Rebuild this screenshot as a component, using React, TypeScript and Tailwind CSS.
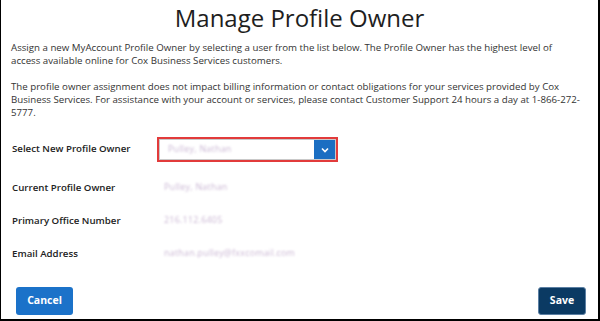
import React from "react";

function Row({ label, children, className = "" }: { label: string; children: React.ReactNode; className?: string }) {
  return (
    <div className={`flex items-center ${className}`}>
      <div className="w-[152px] shrink-0 text-[9.7px] font-semibold text-[#222]">{label}</div>
      {children}
    </div>
  );
}

function Blurred({ children }: { children: React.ReactNode }) {
  return (
    <span className="text-[8.8px] text-[#cbb8d4] blur-[0.9px] tracking-[0.3px]">{children}</span>
  );
}

export default function App() {
  return (
    <div className="w-[600px] h-[321px] bg-white border-l border-r-2 border-b-2 border-black flex flex-col font-['Open_Sans',sans-serif]">
      <h1 className="text-center text-[24px] leading-[30px] pt-[3px] text-[#1e1e1e]">Manage Profile Owner</h1>
      <div className="px-[10px] mt-[8px] text-[9.7px] leading-[13px] text-[#333]">
        <p>
          Assign a new MyAccount Profile Owner by selecting a user from the list below. The Profile Owner has the highest level of
          <br />
          access available online for Cox Business Services customers.
        </p>
        <p className="mt-[13px]">
          The profile owner assignment does not impact billing information or contact obligations for your services provided by Cox
          <br />
          Business Services. For assistance with your account or services, please contact Customer Support 24 hours a day at 1-866-272-
          <br />
          5777.
        </p>
      </div>
      <div className="px-[11px] mt-[18px] flex flex-col">
        <Row label="Select New Profile Owner" className="h-[25px]">
          <div className="ml-[-7px] w-[181px] h-[25px] border-2 border-[#e23b3b] flex">
            <div className="flex-1 flex border border-[#c9c9c9] bg-white">
              <div className="flex-1 flex items-center pl-[8px]">
                <span className="text-[8.8px] text-[#cbb8d4] blur-[0.9px] tracking-[0.3px]">Pulley, Nathan</span>
              </div>
              <div className="w-[21px] bg-[#1b6ec2] flex items-center justify-center">
                <svg width="8" height="6" viewBox="0 0 8 6" fill="none">
                  <path d="M1 1.5 L4 4.5 L7 1.5" stroke="white" strokeWidth="1.6" />
                </svg>
              </div>
            </div>
          </div>
        </Row>
        <Row label="Current Profile Owner" className="h-[16px] mt-[18px]">
          <Blurred>Pulley, Nathan</Blurred>
        </Row>
        <Row label="Primary Office Number" className="h-[16px] mt-[17px]">
          <Blurred>216.112.6405</Blurred>
        </Row>
        <Row label="Email Address" className="h-[16px] mt-[17px]">
          <Blurred>nathan.pulley@fxxcomail.com</Blurred>
        </Row>
      </div>
      <div className="mt-auto flex justify-between pl-[15px] pr-[12px] pb-[4px]">
        <button className="w-[57px] h-[28px] rounded-[3px] bg-[#1b72c9] text-white text-[10.5px] font-bold">Cancel</button>
        <button className="w-[48px] h-[28px] rounded-[3px] bg-[#0b3a63] border border-[#5b7fa3] text-white text-[10.5px] font-bold">Save</button>
      </div>
    </div>
  );
}
